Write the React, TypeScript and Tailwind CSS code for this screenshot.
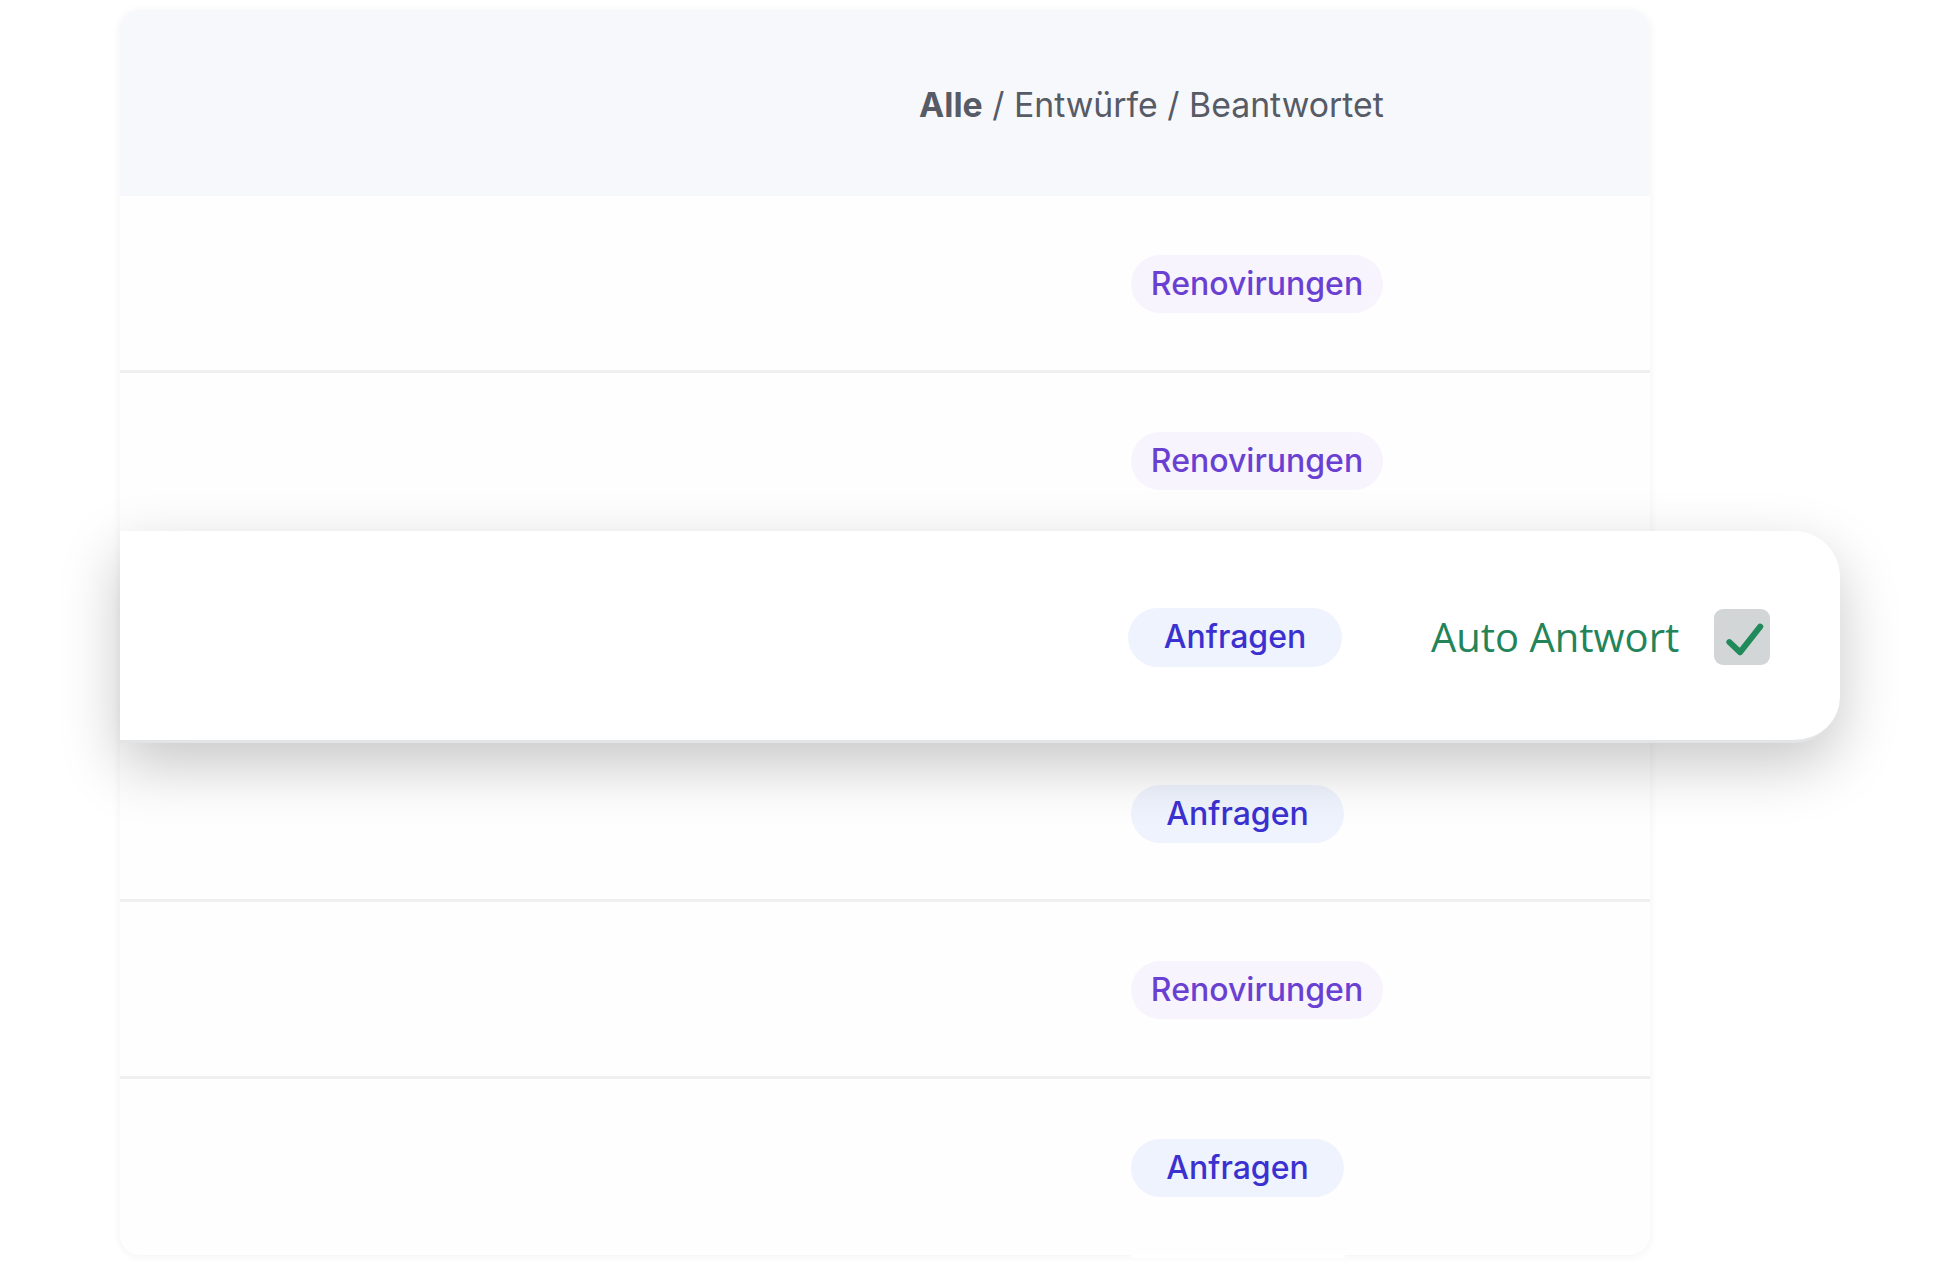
import React from "react";

type Tag = "renov" | "anfrage";

const rows: Tag[] = ["renov", "renov", "anfrage", "anfrage", "renov", "anfrage"];

function Pill({ tag }: { tag: Tag }) {
  if (tag === "renov") {
    return (
      <span className="flex h-[58px] w-[252px] items-center justify-center rounded-full bg-[#f7f4fd] text-[32px] font-medium text-[#6a40d2]">
        Renovirungen
      </span>
    );
  }
  return (
    <span className="flex h-[58px] w-[213px] items-center justify-center rounded-full bg-[#eef3fe] text-[32px] font-medium text-[#3b31d0]">
      Anfragen
    </span>
  );
}

function CheckBox() {
  return (
    <span className="flex h-[56px] w-[56px] items-center justify-center rounded-[9px] bg-[#d3d6d6]">
      <svg width="56" height="56" viewBox="0 0 24 24" fill="none">
        <path
          d="M6.6 14.2L11.2 18.5L19.8 7.6"
          stroke="#218a5a"
          strokeWidth="2.6"
          strokeLinecap="round"
          strokeLinejoin="round"
        />
      </svg>
    </span>
  );
}

export default function App() {
  return (
    <div
      className="h-[1280px] w-[1960px] overflow-hidden bg-white pt-[10px] pl-[120px]"
      style={{ fontFamily: "Inter, 'Noto Sans', sans-serif" }}
    >
      <div className="relative w-[1530px] rounded-[20px] bg-[#fefefe] shadow-[0_1px_10px_rgba(0,0,0,0.06)]">
        {/* header with filter tabs */}
        <div className="flex h-[186px] items-center rounded-t-[20px] bg-[#f7f8fc] pt-[5px] pl-[799px]">
          <span className="text-[33.8px] text-[#565b66]">
            <span className="font-bold">Alle</span> / Entwürfe / Beantwortet
          </span>
        </div>

        {/* message rows */}
        {rows.map((tag, i) => (
          <div
            key={i}
            className={
              i === rows.length - 1
                ? "flex h-[176.5px] items-center pt-[3px] pl-[1011px]"
                : "flex h-[176.5px] items-center border-b-[3px] border-[#efefef] pt-[3px] pl-[1011px]"
            }
          >
            <Pill tag={tag} />
          </div>
        ))}

        {/* highlighted row lifted above the list */}
        <div className="absolute top-[521px] left-0 flex h-[212px] w-[1720px] items-center rounded-r-[46px] border-b-[3px] border-[#e3e4e6] bg-white pt-[3px] pl-[1008px] shadow-[0_22px_60px_rgba(0,0,0,0.22)]">
          <span className="flex h-[59px] w-[214px] items-center justify-center rounded-full bg-[#eef3fe] text-[32px] font-medium text-[#3b31d0]">
            Anfragen
          </span>
          <span
            className="ml-[89px] text-[40px] text-[#23845a]"
            style={{ fontFamily: "'Open Sans', 'Noto Sans', sans-serif" }}
          >
            Auto Antwort
          </span>
          <span className="ml-[35px]">
            <CheckBox />
          </span>
        </div>

        {/* tab of the next pill peeking under the bottom edge */}
        <div className="absolute bottom-[-3px] left-[1011px] h-[4px] w-[214px] bg-white" />
      </div>
    </div>
  );
}
